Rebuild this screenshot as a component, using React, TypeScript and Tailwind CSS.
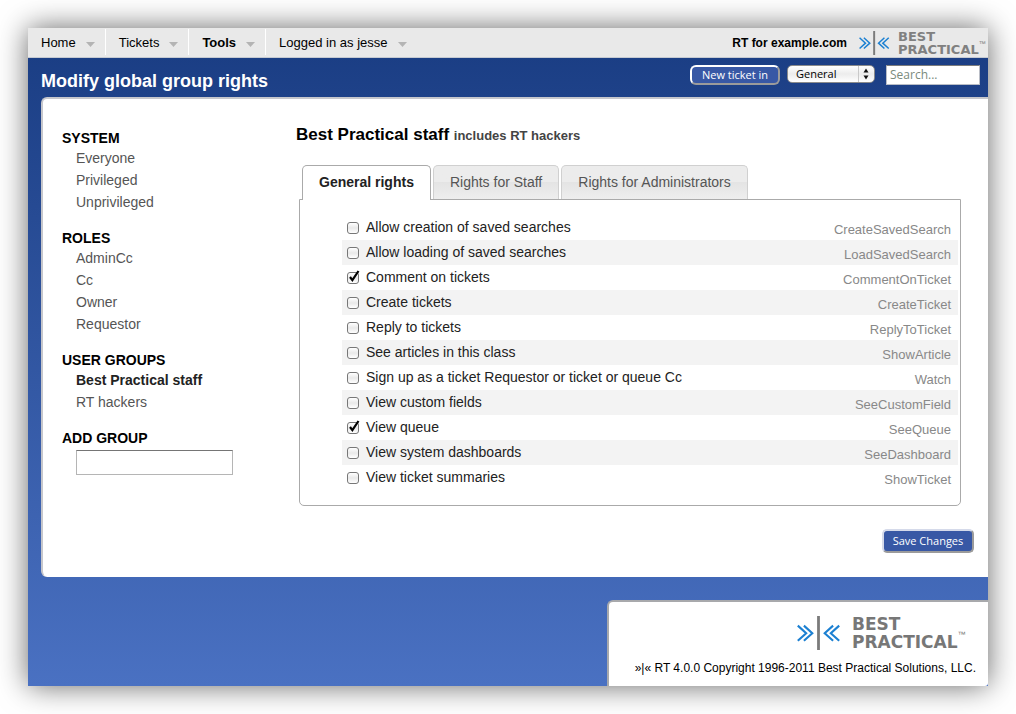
import { useState } from "react";

const menu = [
  { label: "Home" },
  { label: "Tickets" },
  { label: "Tools", active: true },
  { label: "Logged in as jesse" },
];

const groups = [
  { title: "System", items: ["Everyone", "Privileged", "Unprivileged"] },
  { title: "Roles", items: ["AdminCc", "Cc", "Owner", "Requestor"] },
  { title: "User groups", items: ["Best Practical staff", "RT hackers"] },
];

const tabs = ["General rights", "Rights for Staff", "Rights for Administrators"];

const rights = [
  { name: "CreateSavedSearch", label: "Allow creation of saved searches" },
  { name: "LoadSavedSearch", label: "Allow loading of saved searches" },
  { name: "CommentOnTicket", label: "Comment on tickets", checked: true },
  { name: "CreateTicket", label: "Create tickets" },
  { name: "ReplyToTicket", label: "Reply to tickets" },
  { name: "ShowArticle", label: "See articles in this class" },
  { name: "Watch", label: "Sign up as a ticket Requestor or ticket or queue Cc" },
  { name: "SeeCustomField", label: "View custom fields" },
  { name: "SeeQueue", label: "View queue", checked: true },
  { name: "SeeDashboard", label: "View system dashboards" },
  { name: "ShowTicket", label: "View ticket summaries" },
];

const LogoMark = ({ className }: { className: string }) => (
  <svg viewBox="0 0 44 34" className={className} fill="none" aria-hidden="true">
    <path
      d="M0.8 9.6 9.2 17.2 0.8 24.8M6.9 9.6 15.3 17.2 6.9 24.8M36.1 9.6 27.7 17.2 36.1 24.8M42.2 9.6 33.8 17.2 42.2 24.8"
      stroke="#1c80d2"
      strokeWidth="2.1"
    />
    <path d="M21.5 0V34" stroke="#7b7b7b" strokeWidth="2.8" />
  </svg>
);

const NavBar = () => (
  <div className="flex justify-between h-[30px] bg-[#e9e9e9] border-b border-[#c5cad2]">
    <nav className="flex items-start pt-px text-[13px] text-black">
      {menu.map((item) => (
        <a
          key={item.label}
          href="#"
          className={`flex items-center gap-[10px] h-[26px] pl-[13px] pr-[10px] pt-0.5 border-r border-white last:border-0 ${
            item.active ? "font-bold" : ""
          }`}
        >
          {item.label}
          <svg viewBox="0 0 9 5" className="w-[9px] h-[5px] mt-0.5" aria-hidden="true">
            <path d="M0 0H9L4.5 5Z" fill="#b4b4b4" />
          </svg>
        </a>
      ))}
    </nav>
    <div className="flex items-center">
      <span className="text-[12px] font-bold text-black mr-3">RT for example.com</span>
      <div className="flex items-center w-[129px]">
        <LogoMark className="shrink-0 w-[31px] h-[24px] mr-2" />
        <div className="text-[13px] leading-[13px] font-bold font-['DejaVu_Sans',sans-serif] text-[#808080]">
          <div>BEST</div>
          <div>PRACTICAL</div>
        </div>
        <span className="text-[7px] pt-1 text-[#808080]">™</span>
      </div>
    </div>
  </div>
);

const Header = () => (
  <header className="flex items-start justify-between h-[39px] pl-[13px] pr-2 pt-[7px]">
    <h1 className="text-[18px] leading-[32px] font-bold text-white">Modify global group rights</h1>
    <div className="flex items-start font-['Open_Sans',sans-serif] text-[11px]">
      <button className="h-[20px] w-[90px] mr-[7px] leading-[16px] whitespace-nowrap text-white bg-[#3858a5] border-2 border-t-white border-l-white border-r-[#9b9b9b] border-b-[#9b9b9b] rounded-md">
        New ticket in
      </button>
      <div className="relative mr-[11px]">
        <select
          aria-label="Queue"
          className="block appearance-none w-[88px] h-[18px] pl-2 leading-[16px] text-black rounded-[5px] border border-[#8b8b8b] bg-linear-to-b from-white via-[#ececec] to-white"
        >
          <option>General</option>
        </select>
        <svg
          viewBox="0 0 17 18"
          className="absolute top-0 right-0 w-[17px] h-[18px] pointer-events-none"
          aria-hidden="true"
        >
          <path d="M0.5 1V17" stroke="#c9c9c9" />
          <path d="M5.5 7.5H10.5L8 3.5ZM5.5 10.5H10.5L8 14.5Z" fill="#111" />
        </svg>
      </div>
      <input
        type="text"
        aria-label="Search"
        placeholder="Search..."
        className="w-[94px] h-[20px] px-[3px] pb-0.5 text-[12px] bg-white border border-[#b9bdc6] border-t-[#7c7c7c] placeholder:text-[#7a8a7c]"
      />
    </div>
  </header>
);

const Sidebar = () => (
  <aside className="shrink-0 w-[253px] pl-[19px] pt-[30px] text-[14px]">
    {groups.map((group) => (
      <section key={group.title} className="mb-4">
        <h3 className="leading-[18px] font-bold uppercase text-black">{group.title}</h3>
        <ul className="pl-[14px] leading-[22px]">
          {group.items.map((item) => (
            <li key={item}>
              <a
                href="#"
                className={item === "Best Practical staff" ? "font-bold text-[#222]" : "text-[#555]"}
              >
                {item}
              </a>
            </li>
          ))}
        </ul>
      </section>
    ))}
    <label htmlFor="add-group" className="block leading-[18px] font-bold uppercase text-black">
      Add group
    </label>
    <input
      id="add-group"
      type="text"
      className="block w-[157px] h-[25px] ml-[14px] mt-[3px] px-1 bg-white border border-[#b5b5b5] border-t-[#757575]"
    />
  </aside>
);

const RightsRow = ({ right }: { right: (typeof rights)[number] }) => (
  <li className="flex items-center justify-between h-[25px] pl-[5px] pr-[7px] even:bg-[#f3f3f3]">
    <label className="flex items-center gap-[7px] text-[14px] text-[#222]">
      <span className="relative">
        <input
          type="checkbox"
          name={right.name}
          defaultChecked={right.checked}
          className="peer block appearance-none size-3 rounded-[3px] border border-[#777] bg-linear-to-b from-white via-[#e9e9e9] to-white"
        />
        {/* the tick sticks out over the top of the box */}
        <svg
          viewBox="0 0 14 14"
          className="absolute -top-0.5 left-0 hidden size-3.5 peer-checked:block pointer-events-none"
          aria-hidden="true"
        >
          <path d="M3 7 5.4 10.2 11.5 1" fill="none" stroke="#000" strokeWidth="2.2" />
        </svg>
      </span>
      {right.label}
    </label>
    <span className="pt-1 text-[13px] text-[#888]">{right.name}</span>
  </li>
);

const RightsEditor = () => {
  const [tab, setTab] = useState(tabs[0]);

  return (
    <main className="flex-1 min-w-0 pt-6 pb-6">
      <h2 className="text-[17px] leading-[24px] font-bold text-black">
        Best Practical staff <span className="text-[13px] text-[#444]">includes RT hackers</span>
      </h2>

      <div className="ml-[3px] mr-[27px] mt-[17px]">
        <div role="tablist" className="flex items-start h-[34px] gap-0.5 pl-[3px] text-[14px]">
          {tabs.map((name) => (
            <button
              key={name}
              role="tab"
              aria-selected={tab === name}
              onClick={() => setTab(name)}
              className={`px-4 rounded-t-[5px] border border-b-0 ${
                tab === name
                  ? "relative h-[35px] pb-0.5 bg-white border-[#aaa] font-bold text-[#222]"
                  : "h-[34px] bg-linear-to-b from-[#ececec] from-50% via-[#e4e4e4] via-50% to-[#eeeeee] border-[#d0d0d0] text-[#555]"
              }`}
            >
              {name}
            </button>
          ))}
        </div>
        <div role="tabpanel" className="border border-[#aaa] rounded-b-[5px] pl-[42px] pr-0.5 py-[15px]">
          <ul>
            {rights.map((right) => (
              <RightsRow key={right.name} right={right} />
            ))}
          </ul>
        </div>
      </div>

      <div className="flex justify-end mt-[23px] pr-[14px]">
        <button className="w-[92px] h-[24px] leading-[20px] whitespace-nowrap font-['Open_Sans',sans-serif] text-[11px] text-white bg-[#3858a5] border-2 border-t-[#d5daea] border-l-[#d5daea] border-r-[#9b9b9b] border-b-[#9b9b9b] rounded-[5px]">
          Save Changes
        </button>
      </div>
    </main>
  );
};

const Footer = () => (
  <footer className="w-[381px] ml-auto mt-[23px] pt-[13px] pb-[9px] pr-3 bg-white border-t-2 border-l-2 border-[#a8a9ac] rounded-tl-md rounded-br-[3px]">
    <div className="flex items-center w-[179px] ml-auto text-[#777]">
      <LogoMark className="shrink-0 w-[44px] h-[34px] mr-[11px]" />
      <div className="text-[17px] leading-[18px] font-bold font-['DejaVu_Sans',sans-serif]">
        <div>BEST</div>
        <div>PRACTICAL</div>
      </div>
      <span className="text-[8px] pt-1">™</span>
    </div>
    <p className="mt-[8px] text-right text-[12px] leading-[18px] text-black">
      »|« RT 4.0.0 Copyright 1996-2011 Best Practical Solutions, LLC.
    </p>
  </footer>
);

export default function App() {
  return (
    <div className="p-7 bg-white font-['Liberation_Sans',Arial,sans-serif]">
      <div className="bg-linear-to-b from-[#193c82] to-[#4a71c2] shadow-[0_0_28px_rgba(0,0,0,0.6)]">
        <NavBar />
        <Header />
        <div className="flex ml-[13px] bg-white border-t-2 border-l-2 border-[#c6c7cc] rounded-l-md">
          <Sidebar />
          <RightsEditor />
        </div>
        <Footer />
      </div>
    </div>
  );
}
